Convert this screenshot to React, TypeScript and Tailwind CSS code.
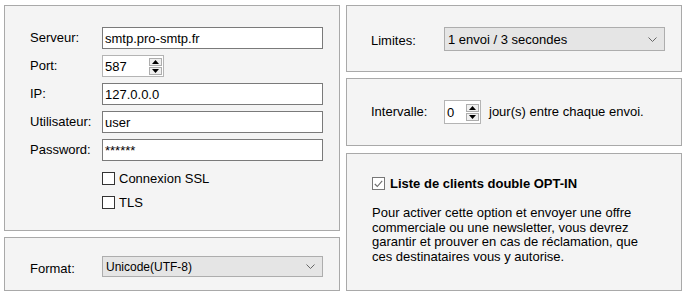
import React from 'react';

const font = { fontFamily: '"Liberation Sans", Arial, sans-serif' };

const Panel: React.FC<{ className?: string; children?: React.ReactNode }> = ({ className = '', children }) => (
  <div className={`border border-[#a9a9a9] bg-[#f4f4f4] ${className}`}>{children}</div>
);

const TextInput: React.FC<{ value: string }> = ({ value }) => (
  <div className="flex h-[22px] w-[221px] items-center border border-[#7a7a7a] bg-white pl-[2px] text-[13px] leading-none">
    {value}
  </div>
);

const SpinBox: React.FC<{ value: string; width: string; height: string }> = ({ value, width, height }) => (
  <div className={`flex ${width} ${height} items-center justify-between border border-[#b4b4b4] bg-white pl-[2px] pr-px text-[13px] leading-none`}>
    <span>{value}</span>
    <div className="flex h-full flex-col justify-center gap-px py-px">
      <div className="flex h-[8px] w-[13px] items-center justify-center border border-[#adadad] bg-[#f0f0f0]">
        <svg width="7" height="4" viewBox="0 0 7 4"><path d="M3.5 0L7 4H0z" fill="#000" /></svg>
      </div>
      <div className="flex h-[8px] w-[13px] items-center justify-center border border-[#adadad] bg-[#f0f0f0]">
        <svg width="7" height="4" viewBox="0 0 7 4"><path d="M0 0h7L3.5 4z" fill="#000" /></svg>
      </div>
    </div>
  </div>
);

const Chevron = () => (
  <svg width="9" height="5" viewBox="0 0 9 5" className="mr-[7px]">
    <path d="M0.5 0.5L4.5 4.5L8.5 0.5" fill="none" stroke="#666" strokeWidth="1" />
  </svg>
);

const Select: React.FC<{ value: string; height: string; textSize: string }> = ({ value, height, textSize }) => (
  <div className={`flex w-[221px] ${height} items-center justify-between border border-[#adadad] bg-[#e5e5e5] pl-[3px] ${textSize} leading-none`}>
    <span>{value}</span>
    <Chevron />
  </div>
);

const Checkbox: React.FC<{ label: string }> = ({ label }) => (
  <div className="flex items-center">
    <div className="h-[13px] w-[13px] border border-[#333] bg-white" />
    <span className="ml-[4px] text-[13px] leading-none">{label}</span>
  </div>
);

export default function App() {
  const rows = [
    { label: 'Serveur:', value: 'smtp.pro-smtp.fr' },
    { label: 'IP:', value: '127.0.0.0' },
    { label: 'Utilisateur:', value: 'user' },
    { label: 'Password:', value: '******' },
  ];

  return (
    <div className="flex h-[296px] w-[688px] gap-[6px] bg-white pl-[4px] pt-[5px] text-[#000]" style={font}>
      {/* left column */}
      <div className="flex w-[336px] flex-col gap-[6px]">
        <Panel className="h-[226px] pl-[25px] pt-[21px]">
          <div className="flex flex-col gap-[6px]">
            <div className="flex items-center">
              <span className="w-[72px] text-[13px]">{rows[0].label}</span>
              <TextInput value={rows[0].value} />
            </div>
            <div className="flex items-center">
              <span className="w-[72px] text-[13px]">Port:</span>
              <SpinBox value="587" width="w-[62px]" height="h-[22px]" />
            </div>
            {rows.slice(1).map((r) => (
              <div key={r.label} className="flex items-center">
                <span className="w-[72px] text-[13px]">{r.label}</span>
                <TextInput value={r.value} />
              </div>
            ))}
          </div>
          <div className="ml-[72px] mt-[11px] flex flex-col gap-[11px]">
            <Checkbox label="Connexion SSL" />
            <Checkbox label="TLS" />
          </div>
        </Panel>
        <Panel className="flex h-[54px] items-start pl-[25px] pt-[18px]">
          <span className="w-[72px] pt-[3px] text-[13px]">Format:</span>
          <Select value="Unicode(UTF-8)" height="h-[21px]" textSize="text-[12px]" />
        </Panel>
      </div>

      {/* right column */}
      <div className="flex w-[336px] flex-col">
        <Panel className="flex h-[67px] items-start pl-[24px] pt-[21px]">
          <span className="w-[73px] pt-[4px] text-[13px]">Limites:</span>
          <Select value="1 envoi / 3 secondes" height="h-[24px]" textSize="text-[13px]" />
        </Panel>
        <Panel className="mt-[6px] flex h-[68px] items-center pl-[24px]">
          <span className="w-[73px] text-[13px]">Intervalle:</span>
          <SpinBox value="0" width="w-[37px]" height="h-[24px]" />
          <span className="ml-[8px] text-[13px]">jour(s) entre chaque envoi.</span>
        </Panel>
        <Panel className="mt-[7px] h-[138px] pl-[25px] pt-[23px]">
          <div className="flex items-center">
            <div className="flex h-[13px] w-[13px] items-center justify-center border border-[#777] bg-white">
              <svg width="9" height="8" viewBox="0 0 9 8">
                <path d="M0.8 4L3.3 6.5L8.2 0.8" fill="none" stroke="#6a6a6a" strokeWidth="1.1" />
              </svg>
            </div>
            <span className="ml-[5px] text-[13px] font-bold leading-none">Liste de clients double OPT-IN</span>
          </div>
          <p className="mt-[16px] text-[13px] leading-[14.6px]">
            Pour activer cette option et envoyer une offre
            <br />
            commerciale ou une newsletter, vous devrez
            <br />
            garantir et prouver en cas de réclamation, que
            <br />
            ces destinataires vous y autorise.
          </p>
        </Panel>
      </div>
    </div>
  );
}
